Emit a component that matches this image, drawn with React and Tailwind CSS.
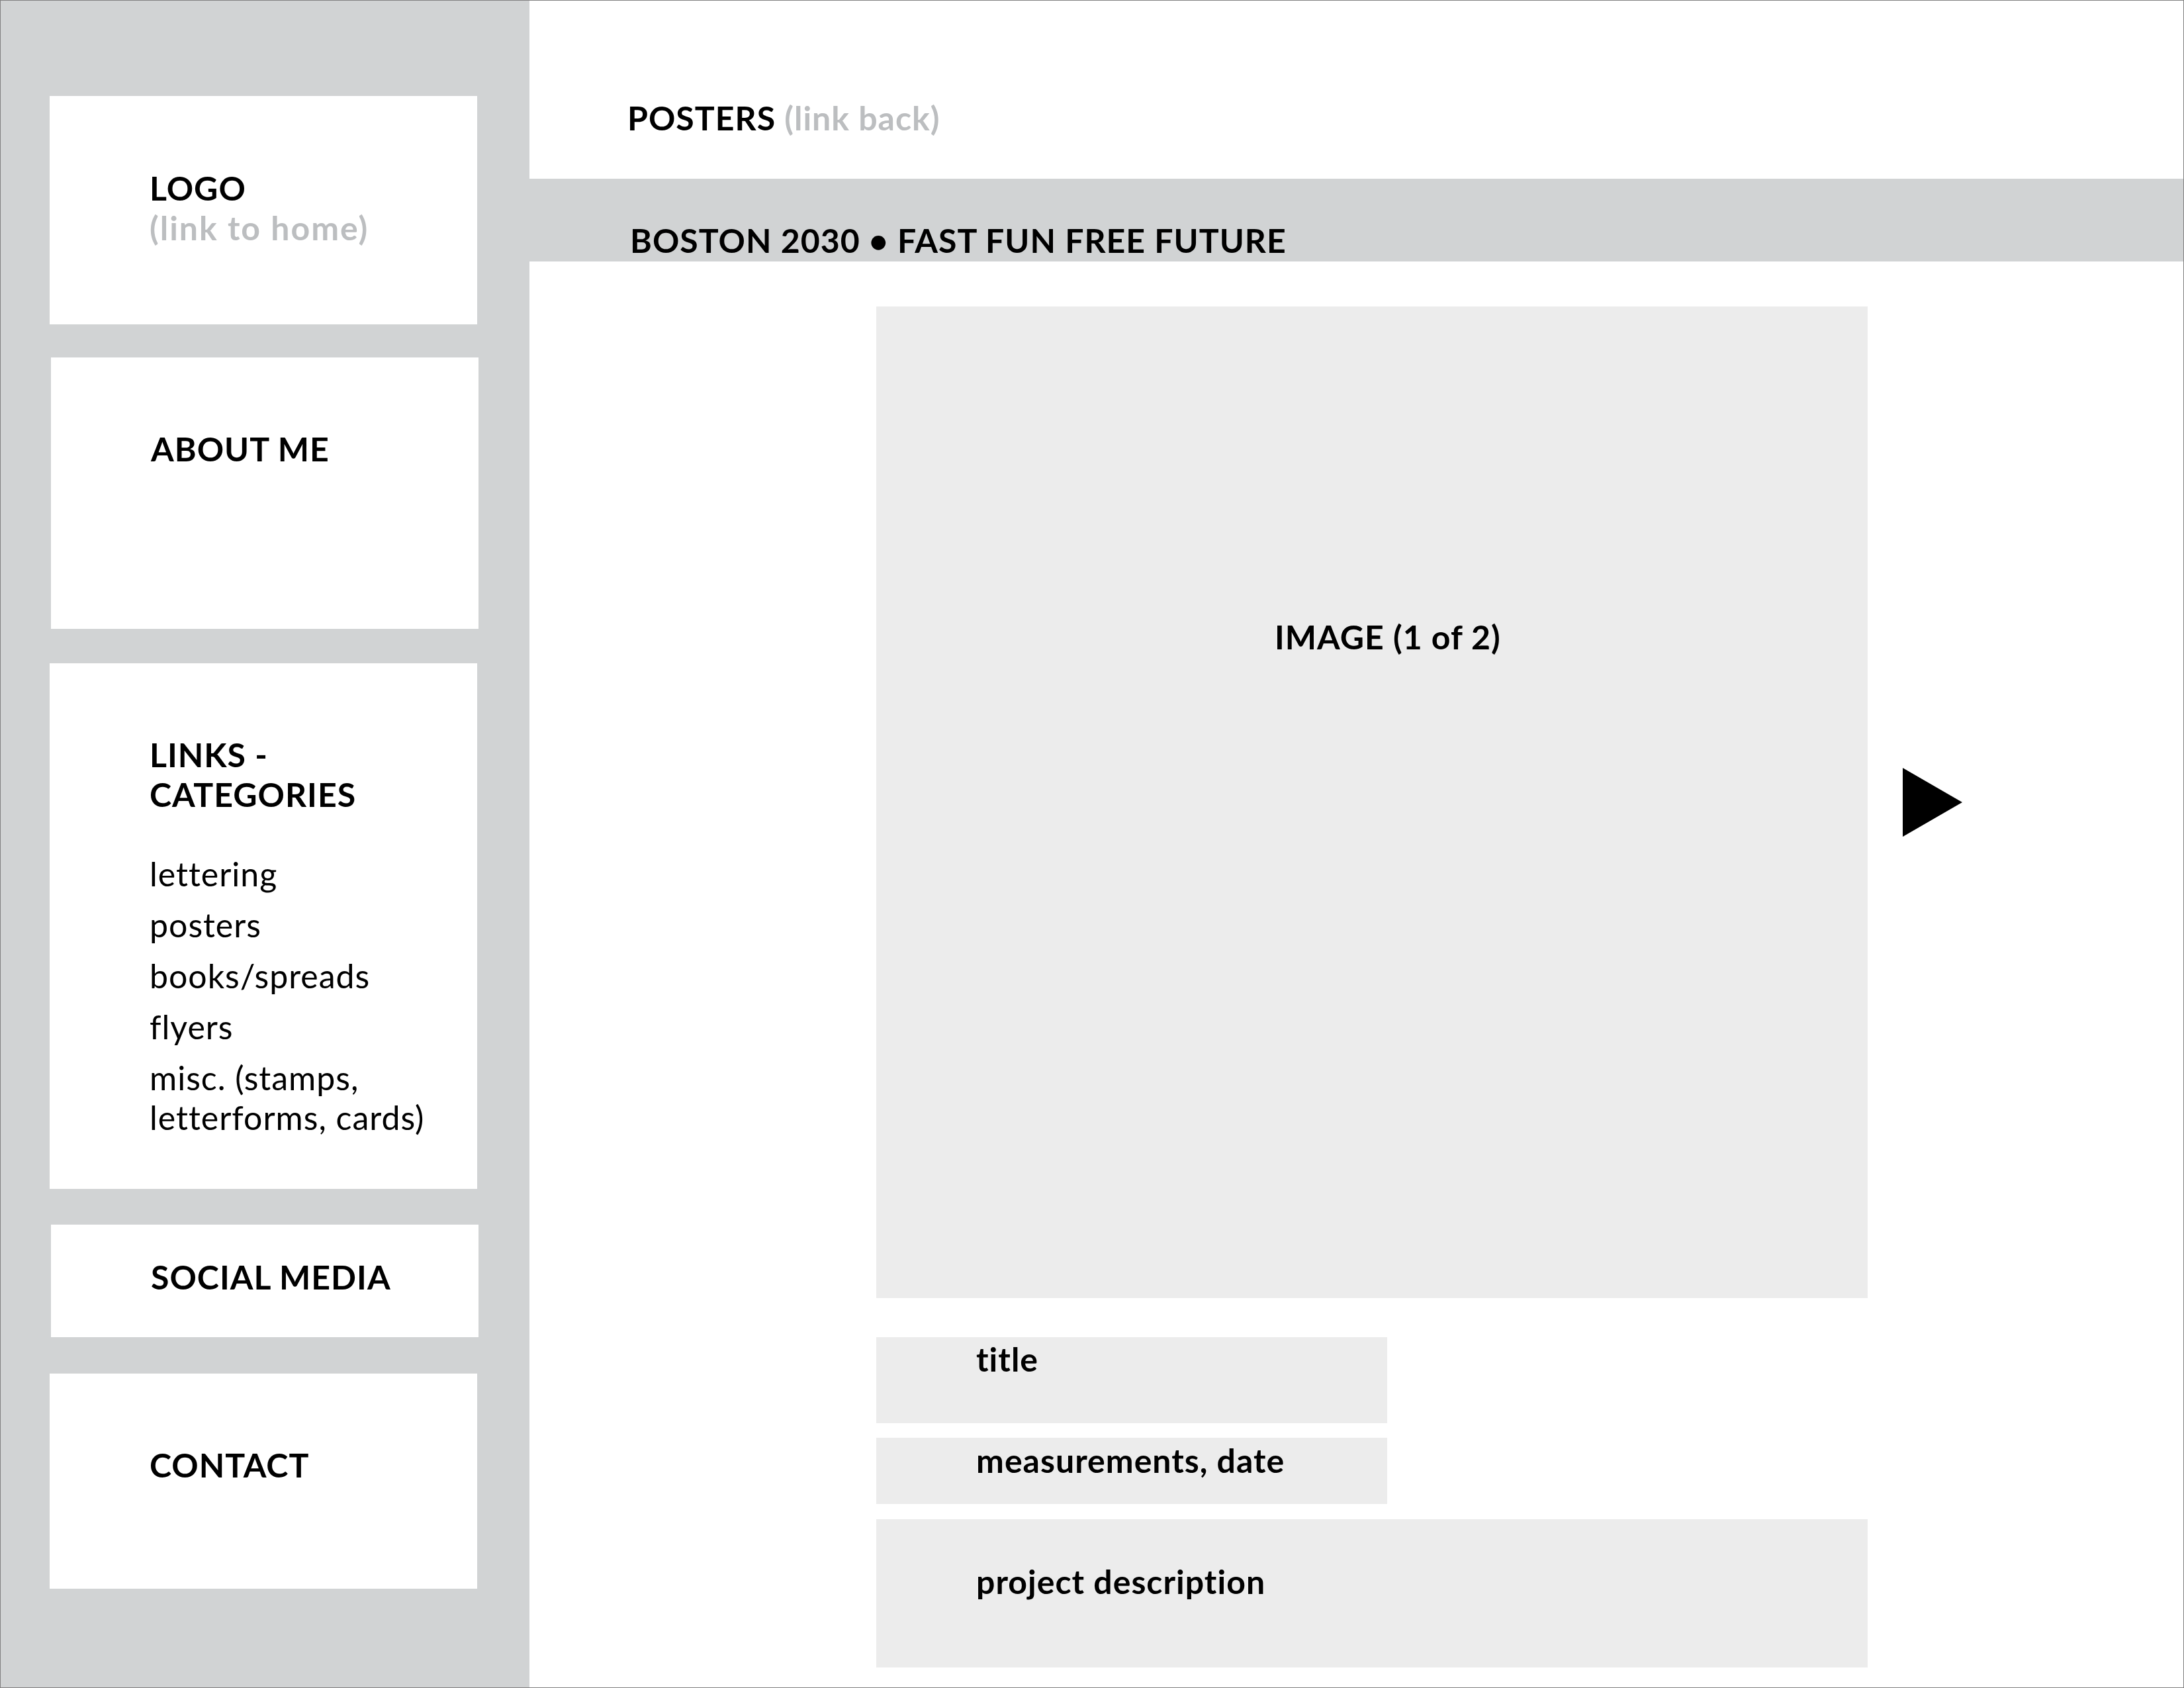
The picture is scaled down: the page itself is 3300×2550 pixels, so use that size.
import React from "react";

const categories = ["lettering", "posters", "books/spreads", "flyers", "misc. (stamps, letterforms, cards)"];

const Box = ({className, children}) => (
    <div className={"bg-white pl-[151px] " + className}>{children}</div>
);

export default function App() {
    return (
        <div className="flex w-[3300px] h-[2550px] border border-[#808080] bg-white font-['Lato',sans-serif] text-[50px] leading-[60px] tracking-[1px] text-black">
            {/* sidebar */}
            <div className="w-[799px] shrink-0 bg-[#d1d3d4] pt-[144px] pl-[74px] pr-[79px] flex flex-col">
                <Box className="h-[345px] pt-[109px] font-bold">
                    <p>LOGO</p>
                    <p className="text-[#bcbec0] tracking-[2px]">(link to home)</p>
                </Box>
                <Box className="h-[410px] mt-[50px] ml-[2px] -mr-[2px] pt-[108px] font-bold">
                    <p>ABOUT ME</p>
                </Box>
                <Box className="h-[794px] mt-[52px] pt-[108px] pr-[30px]">
                    <p className="font-bold">LINKS -<br/>CATEGORIES</p>
                    <ul className="mt-[60px] flex flex-col gap-[17px]">
                        {categories.map((c) => (
                            <li key={c}>{c}</li>
                        ))}
                    </ul>
                </Box>
                <Box className="h-[170px] mt-[54px] ml-[2px] -mr-[2px] pt-[49px] font-bold">
                    <p>SOCIAL MEDIA</p>
                </Box>
                <Box className="h-[325px] mt-[55px] pt-[108px] font-bold">
                    <p>CONTACT</p>
                </Box>
            </div>

            {/* main */}
            <div className="flex-1 flex flex-col font-bold">
                <div className="h-[269px] pt-[147px] pl-[148px]">
                    POSTERS <span className="text-[#bcbec0]">(link back)</span>
                </div>
                <div className="h-[125px] bg-[#d1d3d4] pt-[63px] pl-[152px]">
                    BOSTON 2030 • FAST FUN FREE FUTURE
                </div>

                <div className="pl-[524px] pt-[68px] flex flex-col">
                    <div className="flex items-center gap-[53px]">
                        <div className="w-[1498px] h-[1498px] bg-[#ececec] pt-[469px] pl-[602px]">
                            IMAGE (1 of 2)
                        </div>
                        <svg width="90" height="104" viewBox="0 0 90 104">
                            <polygon points="0,0 90,52 0,104" fill="#000"/>
                        </svg>
                    </div>

                    <div className="w-[772px] h-[130px] mt-[59px] bg-[#ececec] pl-[151px] pt-[3px]">title</div>
                    <div className="w-[772px] h-[100px] mt-[22px] bg-[#ececec] pl-[151px] pt-[4px]">measurements, date</div>
                    <div className="w-[1498px] h-[224px] mt-[23px] bg-[#ececec] pl-[151px] pt-[64px]">project description</div>
                </div>
            </div>
        </div>
    );
}
